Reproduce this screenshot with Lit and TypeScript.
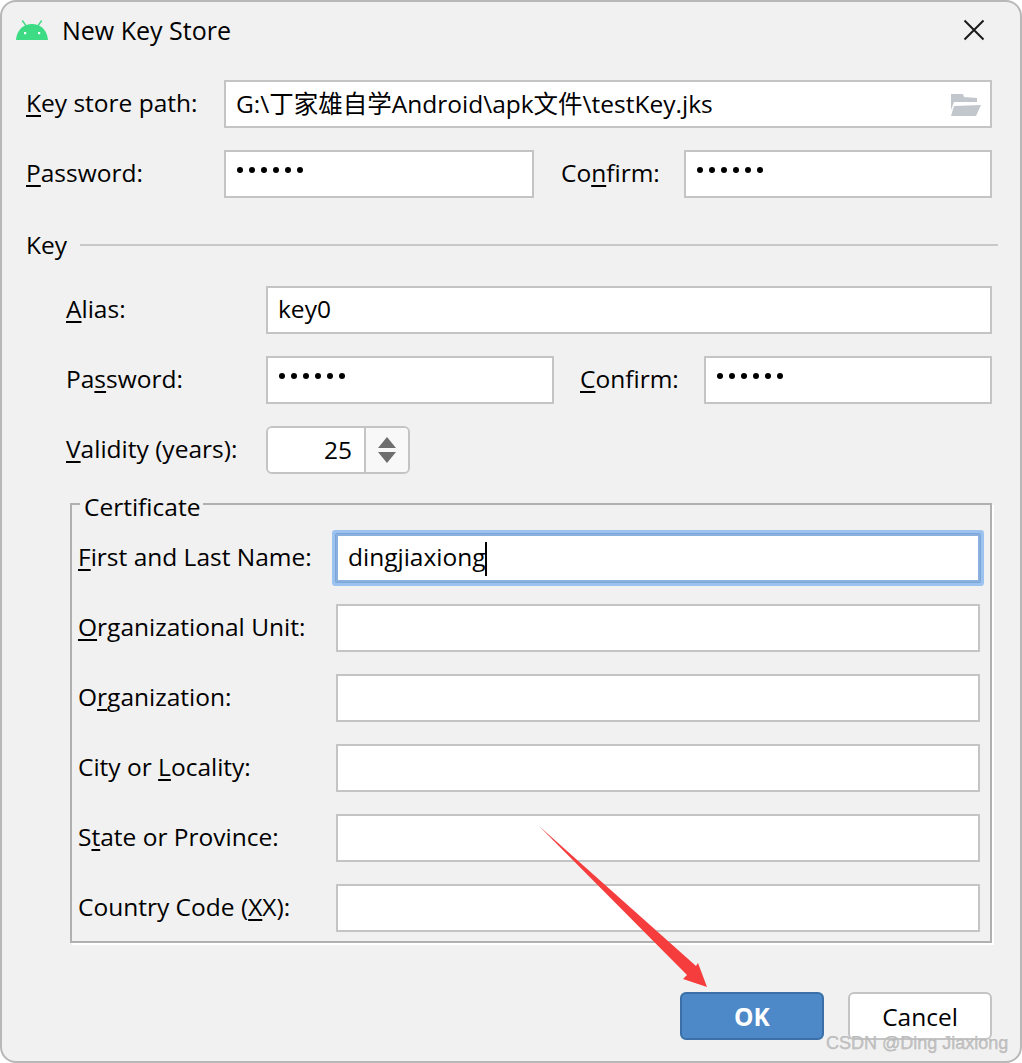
import { LitElement, html, css, svg } from "lit";
import { customElement } from "lit/decorators.js";

const dots = html`<span class="dots">${[0, 1, 2, 3, 4, 5].map(() => html`<i></i>`)}</span>`;

const certRows = [
  { label: html`<u>F</u>irst and Last Name:`, value: "dingjiaxiong", focus: true },
  { label: html`<u>O</u>rganizational Unit:` },
  { label: html`O<u>r</u>ganization:` },
  { label: html`City or <u>L</u>ocality:` },
  { label: html`S<u>t</u>ate or Province:` },
  { label: html`Country Code (<u>X</u>X):` },
];

@customElement("app-root")
export class AppRoot extends LitElement {
  static styles = css`
    :host { display: block; width: 1022px; height: 1063px; background: #fff; overflow: hidden;
      font-family: "Open Sans", "Noto Sans CJK SC", sans-serif; font-size: 24.5px; color: #000; }
    * { box-sizing: border-box; }
    .dialog { position: relative; width: 1022px; height: 1063px; background: #f1f1f1; border: 2px solid #b8b8b8;
      border-radius: 16px; display: flex; flex-direction: column; }
    .title { height: 56px; flex: none; display: flex; align-items: center; padding-left: 14px; padding-right: 35px; }
    .title svg.logo { width: 32px; height: 20px; flex: none; margin-right: 15px; }
    .title .t { flex: 1; font-size: 25px; margin-left: -1px; }
    .title svg.x { width: 22px; height: 22px; flex: none; }
    .body { padding: 22px 28px 0 25px; display: flex; flex-direction: column; gap: 22px; }
    .row { display: flex; align-items: center; height: 48px; }
    .lab { flex: none; white-space: nowrap; padding-bottom: 4px; }
    u { text-decoration-thickness: 2px; text-underline-offset: 3px; }
    .w197 { width: 198px; margin-left: -1px; }
    .w123 { width: 123px; margin-left: 27px; }
    .field { height: 48px; flex: 1; min-width: 0; background: #fff; border: 2px solid #c4c4c4; display: flex; align-items: center;
      padding: 0 10px 4px; white-space: nowrap; justify-content: space-between; }
    .field.w310 { width: 310px; flex: none; }
    .field.w288 { width: 288px; flex: none; }
    .dots { display: flex; gap: 6px; margin-top: -4px; padding-left: 1px; }
    .dots i { width: 6px; height: 6px; border-radius: 50%; background: #000; display: block; }
    .folder { width: 30px; height: 22px; flex: none; margin: 6px -1px 0 0; }
    .keyhead { display: flex; align-items: center; height: 32px; margin: 10px -6px 2px 0; }
    .keyhead span { width: 54px; margin-left: -1px; flex: none; padding-bottom: 4px; }
    .keyhead hr { flex: 1; margin: -3px 0 0; border: 0; height: 2px; background: #c8c8c8; }
    .keybox { padding-left: 39px; display: flex; flex-direction: column; gap: 22px; }
    .w200 { width: 200px; }
    .w124 { width: 124px; margin-left: 26px; }
    .spin { width: 144px; height: 48px; display: flex; border: 2px solid #c4c4c4; border-radius: 6px; overflow: hidden; }
    .spin .num { width: 98px; background: #fff; text-align: right; padding-right: 12px; line-height: 44px; border-right: 2px solid #c4c4c4; }
    .spin .btns { flex: 1; background: #f8f8f8; display: flex; align-items: center; justify-content: center; }
    .spin svg { width: 20px; height: 28px; }
    fieldset { margin: -11px 0 0 4px; padding: 11px 10px 9px 6px; border: 2px solid #b0b0b0; box-shadow: 2px 2px 0 #fff;
      display: flex; flex-direction: column; gap: 22px; min-width: 0; }
    legend { padding: 6px 3px 0 4px; margin-left: 2px; line-height: 32px; font-size: 24.5px; }
    .w258 { width: 258px; }
    .focus { box-shadow: 0 0 0 1px #7ca6d8, 0 0 0 4px #9cc3ef; border-radius: 1px; border-color: #8ab0e0; }
    .value { margin-top: 4px; }
    .caret { display: inline-block; width: 2px; height: 34px; background: #000; vertical-align: middle; margin-left: -1px; }
    .footer { display: flex; justify-content: flex-end; gap: 24px; margin-top: 27px; }
    .btn { width: 144px; height: 48px; border-radius: 6px; display: flex; align-items: center; justify-content: center; }
    .ok { background: #4d88c9; border: 2px solid #3a6fa8; color: #fff; font-weight: 700; }
    .cancel { background: #fff; border: 2px solid #c4c4c4; }
    .overlay { position: absolute; left: -2px; top: -2px; width: 1022px; height: 1063px; pointer-events: none; }
    .mark { position: absolute; left: 824px; top: 1031px; font-family: "Liberation Sans", sans-serif; font-size: 18px;
      color: #c4c4c4; -webkit-text-stroke: 0.25px #a4a4a4; white-space: nowrap; }
  `;

  render() {
    return html`
      <div class="dialog">
        <div class="title">
          <svg class="logo" viewBox="0 0 32 20">
            <path fill="#3ddc84" d="M0 20C.6 12.500 4.500 7.800 9 5.600L5.700 .9 6.800 0l3.600 5C12.200 4.300 14 4 16 4s3.800.3 5.600 1l3.600-5 1.100.9L23 5.600C27.500 7.800 31.400 12.500 32 20z"/>
            <rect x="8" y="12" width="2.200" height="2.200" fill="#fff"/><rect x="22" y="12" width="2.200" height="2.200" fill="#fff"/>
          </svg>
          <div class="t">New Key Store</div>
          <svg class="x" viewBox="0 0 22 22"><path d="M1.500 1.500l19 19M20.500 1.500l-19 19" stroke="#1a1a1a" stroke-width="2" fill="none"/></svg>
        </div>
        <div class="body">
          <div class="row">
            <div class="lab w197"><u>K</u>ey store path:</div>
            <div class="field">
              <span>G:\\丁家雄自学Android\\apk文件\\testKey.jks</span>
              <svg class="folder" viewBox="0 0 30 22"><path fill="#c1c7cc" d="M0 0h12l1 3 13 1v4H3L0 16zM3 12l27-1-5 11H0z"/></svg>
            </div>
          </div>
          <div class="row">
            <div class="lab w197"><u>P</u>assword:</div>
            <div class="field w310">${dots}</div>
            <div class="lab w123">Co<u>n</u>firm:</div>
            <div class="field">${dots}</div>
          </div>
          <div class="keyhead"><span>Key</span><hr /></div>
          <div class="keybox">
            <div class="row">
              <div class="lab w200"><u>A</u>lias:</div>
              <div class="field">key0</div>
            </div>
            <div class="row">
              <div class="lab w200">Pa<u>s</u>sword:</div>
              <div class="field w288">${dots}</div>
              <div class="lab w124"><u>C</u>onfirm:</div>
              <div class="field">${dots}</div>
            </div>
            <div class="row">
              <div class="lab w200"><u>V</u>alidity (years):</div>
              <div class="spin">
                <div class="num">25</div>
                <div class="btns">
                  <svg viewBox="0 0 20 28"><path fill="#6e6e6e" d="M10 1l9 11H1zM1 16h18l-9 11z"/></svg>
                </div>
              </div>
            </div>
            <fieldset>
              <legend>Certificate</legend>
              ${certRows.map(
                (r) => html`<div class="row">
                  <div class="lab w258">${r.label}</div>
                  <div class="field ${r.focus ? "focus" : ""}">
                    ${r.value ? html`<span class="value">${r.value}<span class="caret"></span></span>` : ""}
                  </div>
                </div>`
              )}
            </fieldset>
          </div>
          <div class="footer">
            <div class="btn ok">OK</div>
            <div class="btn cancel">Cancel</div>
          </div>
        </div>
        <svg class="overlay" viewBox="0 0 1022 1063">
          ${svg`<polygon fill="#f53d3d" points="539,826 696,966 698,963 707,987 683,979 687,975"/>`}
        </svg>
        <div class="mark">CSDN @Ding Jiaxiong</div>
      </div>
    `;
  }
}
